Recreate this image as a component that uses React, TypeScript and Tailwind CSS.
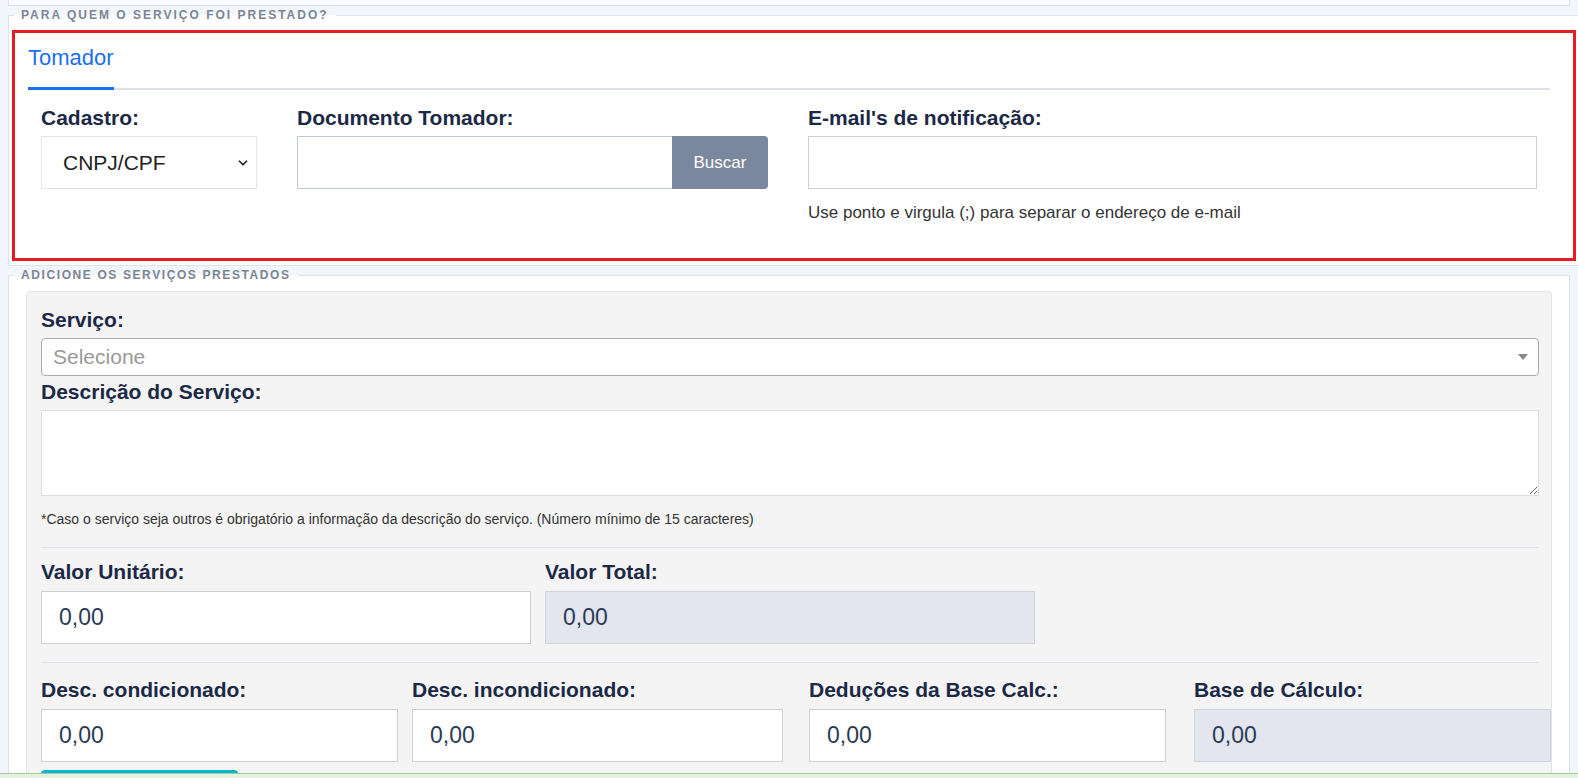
import React from "react";
import { ChevronDown } from "lucide-react";

const label = "text-[21px] font-bold leading-[24px] text-[#1b2946] whitespace-nowrap";
const legendBase =
  "px-[7px] text-[12px] font-bold leading-[16px] text-[#7b8593] whitespace-nowrap";

function ValueBox({ w, gray }: { w: string; gray?: boolean }) {
  return (
    <div
      className={`${w} h-[53px] flex items-center pl-[17px] border text-[23px] text-[#2b3b55] ${
        gray ? "bg-[#e3e6ee] border-[#cfd3da]" : "bg-white border-[#d0d0d0]"
      }`}
    >
      0,00
    </div>
  );
}

export default function App() {
  return (
    <div className="h-[778px] overflow-hidden bg-[#f1f5fc] px-2 font-['Liberation_Sans',Arial,sans-serif]">
      {/* top card (cut off) */}
      <div className="h-[6px] w-[1562px] border border-t-0 border-[#dde3ee] bg-[#f9fbfe]" />

      {/* fieldset 1 */}
      <fieldset className="mt-[1px] w-[1562px] border border-[#dde3ee] bg-white px-[3px] pb-[4px]">
        <legend className={`${legendBase} ml-[2px] tracking-[2px]`}>PARA QUEM O SERVIÇO FOI PRESTADO?</legend>
        <div className="mt-[7px] h-[231px] w-[1564px] shrink-0 border-[3px] border-[#e31e24]">
          <div className="ml-[13px] mr-[23px] flex border-b-2 border-[#dee2e6] pt-[13px]">
            <div className="-mb-[2px] border-b-[3px] border-[#1a6ff0] pb-[17px] text-[22px] leading-[24px] text-[#1a6ff0]">
              Tomador
            </div>
          </div>
          <div className="ml-[26px] mt-[16px] flex">
            <div className="w-[216px] shrink-0">
              <div className={label}>Cadastro:</div>
              <div className="mt-[6px] flex h-[53px] items-center justify-between border border-[#e5e5e5] bg-white pl-[21px] pr-[6px] text-[21px] text-[#222]">
                <span>CNPJ/CPF</span>
                <ChevronDown size={14} strokeWidth={3} className="text-[#222]" />
              </div>
            </div>
            <div className="ml-[40px] w-[471px] shrink-0">
              <div className={label}>Documento Tomador:</div>
              <div className="mt-[6px] flex h-[53px]">
                <div className="flex-1 border border-r-0 border-[#bcc8d8] bg-white" />
                <div className="flex w-[96px] items-center justify-center rounded-r-[4px] bg-[#7a879e] text-[17px] text-white">
                  Buscar
                </div>
              </div>
            </div>
            <div className="ml-[40px] w-[729px] shrink-0">
              <div className={label}>E-mail's de notificação:</div>
              <div className="mt-[6px] h-[53px] border border-[#cfcfcf] bg-white" />
              <div className="mt-[14px] text-[17px] leading-[20px] text-[#333]">
                Use ponto e virgula (;) para separar o endereço de e-mail
              </div>
            </div>
          </div>
        </div>
      </fieldset>

      {/* fieldset 2 */}
      <fieldset className="mt-[1px] w-[1562px] border border-[#dde3ee] bg-white pb-4">
        <legend className={`${legendBase} ml-[5px] tracking-[1.6px]`}>ADICIONE OS SERVIÇOS PRESTADOS</legend>
        <div className="ml-[17px] mt-[8px] w-[1526px] rounded-[4px] border border-[#e4e4e4] bg-[#f4f4f4] pl-[14px] pr-[12px] pt-[16px] pb-4">
          <div className={label}>Serviço:</div>
          <div className="mt-[6px] flex h-[38px] items-center justify-between rounded-[4px] border border-[#aaaaaa] bg-white pl-[11px] pr-[10px] text-[21px] text-[#999]">
            <span>Selecione</span>
            <svg width="10" height="6" viewBox="0 0 10 6">
              <path d="M0 0h10L5 6z" fill="#888" />
            </svg>
          </div>
          <div className={`${label} mt-[4px]`}>Descrição do Serviço:</div>
          <textarea className="mt-[6px] block h-[86px] w-full border border-[#dedede] bg-white outline-none" />
          <div className="mt-[14px] text-[14px] leading-[18px] text-[#333]">
            *Caso o serviço seja outros é obrigatório a informação da descrição do serviço. (Número mínimo de 15 caracteres)
          </div>
          <div className="mt-[19px] border-t border-[#dcdfe5]" />
          <div className="mt-[12px] flex gap-[14px]">
            <div className="w-[490px] shrink-0">
              <div className={label}>Valor Unitário:</div>
              <div className="mt-[7px]">
                <ValueBox w="w-[490px]" />
              </div>
            </div>
            <div className="w-[490px] shrink-0">
              <div className={label}>Valor Total:</div>
              <div className="mt-[7px]">
                <ValueBox w="w-[490px]" gray />
              </div>
            </div>
          </div>
          <div className="mt-[18px] border-t border-[#dcdfe5]" />
          <div className="mt-[15px] flex">
            <div className="w-[357px] shrink-0">
              <div className={label}>Desc. condicionado:</div>
              <div className="mt-[7px]">
                <ValueBox w="w-[357px]" />
              </div>
            </div>
            <div className="ml-[14px] w-[371px] shrink-0">
              <div className={label}>Desc. incondicionado:</div>
              <div className="mt-[7px]">
                <ValueBox w="w-[371px]" />
              </div>
            </div>
            <div className="ml-[26px] w-[357px] shrink-0">
              <div className={label}>Deduções da Base Calc.:</div>
              <div className="mt-[7px]">
                <ValueBox w="w-[357px]" />
              </div>
            </div>
            <div className="ml-[28px] w-[357px] shrink-0">
              <div className={label}>Base de Cálculo:</div>
              <div className="mt-[7px]">
                <ValueBox w="w-[357px]" gray />
              </div>
            </div>
          </div>
          <div className="mt-[8px] h-[40px] w-[197px] rounded-[4px] bg-[#00b5d1]" />
        </div>
      </fieldset>

      {/* bottom bar overlay */}
      <div className="fixed bottom-0 left-0 right-0 h-[5px] border-t border-[#a9c79e] bg-[#e4f1de]" />
    </div>
  );
}
